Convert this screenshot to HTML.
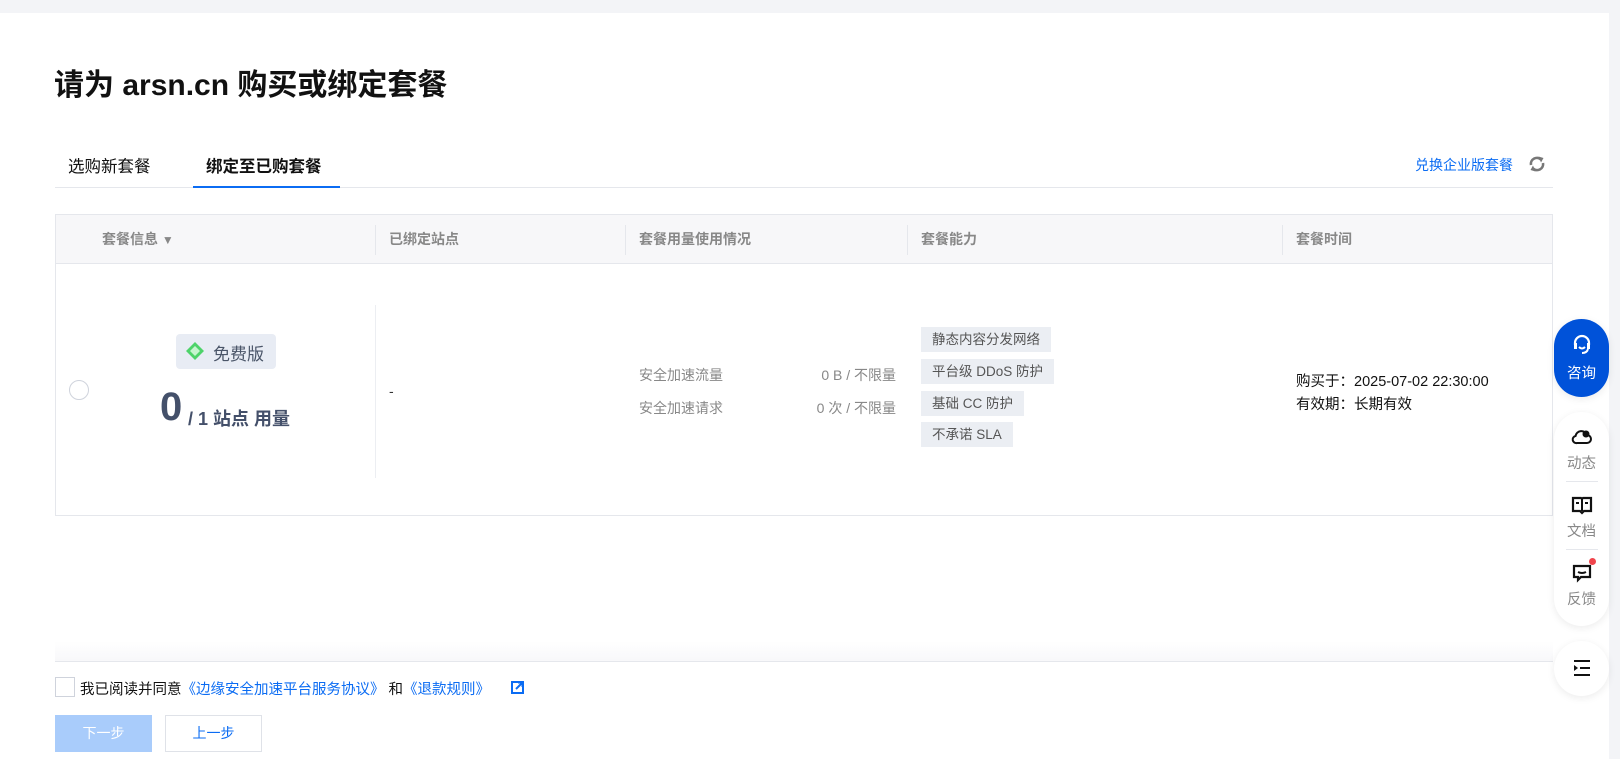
<!DOCTYPE html>
<html><head><meta charset="utf-8"><style>
*{margin:0;padding:0;box-sizing:border-box}
body{width:1620px;height:759px;position:relative;overflow:hidden;background:#f3f4f7;font-family:"Liberation Sans","Noto Sans CJK SC",sans-serif;color:#000}
.a{position:absolute;white-space:nowrap}
.main{position:absolute;left:0;top:13px;width:1609px;height:746px;background:#fff}
.th{position:absolute;top:214px;height:50px;line-height:50px;font-size:14px;color:#888;font-weight:bold}
.tag{position:absolute;left:921px;height:25px;line-height:25px;background:#ebeef3;color:#555;font-size:13.5px;padding:0 11px}
.side{position:absolute;left:1554px;width:55px;background:#fff;border-radius:28px;box-shadow:0 2px 8px rgba(0,0,0,.08);text-align:center}
.lbl{font-size:14px;color:#888}
</style></head><body>
<div class="main"></div>
<div class="a" style="left:54px;top:60px;font-size:30px;font-weight:bold;color:#111">请为 arsn.cn 购买或绑定套餐</div>
<div class="a" style="left:68px;top:153px;font-size:16.5px;color:#111">选购新套餐</div>
<div class="a" style="left:206px;top:153px;font-size:16.5px;font-weight:bold;color:#111">绑定至已购套餐</div>
<div class="a" style="left:55px;top:187px;width:1498px;height:1px;background:#e5e7ec"></div>
<div class="a" style="left:193px;top:186px;width:147px;height:2px;background:#0b6cf3"></div>
<div class="a" style="left:1415px;top:155px;font-size:14px;color:#0b6cf3">兑换企业版套餐</div>
<svg class="a" style="left:1528px;top:155px" width="18" height="18" viewBox="0 0 18 18"><path d="M3 10A6 6 0 0 1 13 4.5" stroke="#777" stroke-width="2.6" fill="none"/><path d="M10.5 1.5l5 1.5-2.5 4.5z" fill="#777"/><path d="M15 8A6 6 0 0 1 5 13.5" stroke="#777" stroke-width="2.6" fill="none"/><path d="M7.5 16.5l-5-1.5 2.5-4.5z" fill="#777"/></svg>
<div class="a" style="left:55px;top:214px;width:1498px;height:302px;border:1px solid #e5e7ec"></div>
<div class="a" style="left:56px;top:215px;width:1496px;height:49px;background:#f7f7f9;border-bottom:1px solid #e5e7ec"></div>
<div class="th" style="left:102px">套餐信息 <span style="font-size:12px">▼</span></div>
<div class="th" style="left:389px">已绑定站点</div>
<div class="th" style="left:639px">套餐用量使用情况</div>
<div class="th" style="left:921px">套餐能力</div>
<div class="th" style="left:1296px">套餐时间</div>
<div class="a" style="left:375px;top:225px;width:1px;height:30px;background:#e5e7ec"></div>
<div class="a" style="left:625px;top:225px;width:1px;height:30px;background:#e5e7ec"></div>
<div class="a" style="left:907px;top:225px;width:1px;height:30px;background:#e5e7ec"></div>
<div class="a" style="left:1282px;top:225px;width:1px;height:30px;background:#e5e7ec"></div>
<div class="a" style="left:375px;top:305px;width:1px;height:173px;background:#eceef2"></div>
<div class="a" style="left:69px;top:380px;width:20px;height:20px;border:1px solid #cfd3dc;border-radius:50%"></div>
<div class="a" style="left:176px;top:334px;width:100px;height:35px;background:#e8ecf4;border-radius:4px"></div>
<svg class="a" style="left:185px;top:341px" width="20" height="20" viewBox="0 0 20 20"><path d="M10 1L19 10 10 19 1 10z" fill="#4ed36a"/><path d="M10 5L15 10 10 15 5 10z" fill="#c6f5cf"/></svg>
<div class="a" style="left:213px;top:340px;font-size:17px;color:#4a5568">免费版</div>
<div class="a" style="left:160px;top:384px;font-size:40px;font-weight:bold;color:#44506a;line-height:46px">0</div>
<div class="a" style="left:188px;top:405px;font-size:18px;font-weight:bold;color:#44506a">/ 1 站点 用量</div>
<div class="a" style="left:389px;top:383px;font-size:14px;color:#333">-</div>
<div class="a lbl" style="left:639px;top:365px">安全加速流量</div>
<div class="a lbl" style="left:639px;top:398px">安全加速请求</div>
<div class="a lbl" style="left:696px;top:365px;width:200px;text-align:right">0 B / 不限量</div>
<div class="a lbl" style="left:696px;top:398px;width:200px;text-align:right">0 次 / 不限量</div>
<div class="tag" style="top:327px">静态内容分发网络</div>
<div class="tag" style="top:359px">平台级 DDoS 防护</div>
<div class="tag" style="top:391px">基础 CC 防护</div>
<div class="tag" style="top:422px">不承诺 SLA</div>
<div class="a" style="left:1296px;top:370px;font-size:14.5px;color:#111">购买于：2025-07-02 22:30:00</div>
<div class="a" style="left:1296px;top:393px;font-size:14.5px;color:#111">有效期：长期有效</div>
<div class="a" style="left:55px;top:641px;width:1498px;height:20px;background:linear-gradient(#fff,#f8f8fa)"></div>
<div class="a" style="left:55px;top:661px;width:1498px;height:1px;background:#e5e7ec"></div>
<div class="a" style="left:55px;top:677px;width:20px;height:20px;border:1px solid #cfd3dc"></div>
<div class="a" style="left:80px;top:678px;font-size:14.5px;color:#111">我已阅读并同意<span style="color:#0b6cf3">《边缘安全加速平台服务协议》</span> 和<span style="color:#0b6cf3">《退款规则》</span></div>
<svg class="a" style="left:511px;top:681px" width="13" height="13" viewBox="0 0 13 13"><rect x="1" y="1" width="11" height="11" fill="none" stroke="#0b6cf3" stroke-width="2"/><path d="M5 8L11 2M7 1.5h4.5V6" stroke="#0b6cf3" stroke-width="2" fill="#fff"/></svg>
<div class="a" style="left:55px;top:715px;width:97px;height:37px;background:#a9ccfb;color:#fff;font-size:14px;text-align:center;line-height:37px">下一步</div>
<div class="a" style="left:165px;top:715px;width:97px;height:37px;border:1px solid #dfe2e8;color:#0b6cf3;font-size:14px;text-align:center;line-height:35px">上一步</div>
<div class="side" style="top:319px;height:78px;background:#0052d9">
<svg style="margin-top:14px" width="22" height="22" viewBox="0 0 22 22"><path d="M4 12V10a7 7 0 0 1 14 0v2" stroke="#fff" stroke-width="2.2" fill="none"/><rect x="3" y="10" width="3" height="6" fill="#fff"/><rect x="16" y="10" width="3" height="6" fill="#fff"/><path d="M8 14q3 3 6 0M17 16q-1 4-6 4" stroke="#fff" stroke-width="2" fill="none"/></svg>
<div style="color:#fff;font-size:14.5px;margin-top:2px">咨询</div></div>
<div class="side" style="top:412px;height:214px">
<svg style="margin-top:15px" width="22" height="20" viewBox="0 0 22 20"><path d="M6 16h10a4 4 0 0 0 0-8 6 6 0 0 0-11.5 1A3.5 3.5 0 0 0 6 16z" stroke="#111" stroke-width="2" fill="none"/><circle cx="15" cy="7" r="3.5" fill="#111"/></svg>
<div class="lbl" style="font-size:14.5px">动态</div>
<div style="width:32px;height:1px;background:#e5e7ec;margin:8px auto 13px"></div>
<svg width="22" height="20" viewBox="0 0 22 20"><path d="M2 3h8l1 1 1-1h8v13h-7l-2 2-2-2H2z" stroke="#111" stroke-width="2.2" fill="none"/><path d="M11 4v12M5 8h3M14 8h3" stroke="#111" stroke-width="2"/></svg>
<div class="lbl" style="font-size:14.5px">文档</div>
<div style="width:32px;height:1px;background:#e5e7ec;margin:8px auto 13px"></div>
<div style="position:relative"><svg width="22" height="20" viewBox="0 0 22 20"><path d="M3 3h16v11H10l-3 3v-3H3z" stroke="#111" stroke-width="2.2" fill="none"/><path d="M7 9q4 2 8 0" stroke="#111" stroke-width="2" fill="none"/></svg><span style="position:absolute;left:35px;top:-5px;width:7px;height:7px;border-radius:50%;background:#f0454c"></span></div>
<div class="lbl" style="font-size:14.5px">反馈</div></div>
<div class="side" style="top:641px;height:55px">
<svg style="margin-top:18px" width="20" height="18" viewBox="0 0 20 18"><path d="M2 2h16M8 9h10M2 16h16" stroke="#111" stroke-width="2"/><path d="M2 6l4 3-4 3z" fill="#111"/></svg></div>
</body></html>
